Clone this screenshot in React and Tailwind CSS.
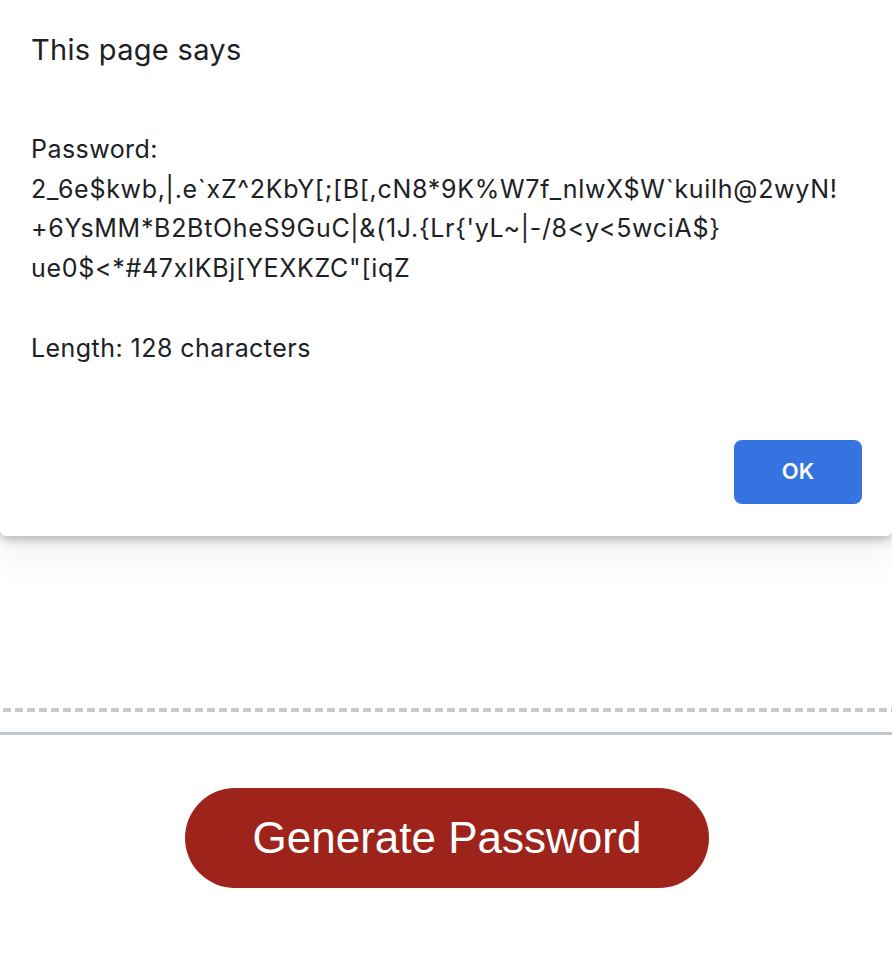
import React from 'react';

const password = [
    "2_6e$kwb,|.e`xZ^2KbY[;[B[,cN8*9K%W7f_nlwX$W`kuilh@2wyN!",
    "+6YsMM*B2BtOheS9GuC|&(1J.{Lr{'yL~|-/8<y<5wciA$}",
    "ue0$<*#47xlKBj[YEXKZC\"[iqZ",
];

const AlertDialog = () => {
    return (
        <div className="absolute top-0 left-0 right-0 bg-white rounded-b-[6px] shadow-[0_4px_10px_rgba(0,0,0,0.25),0_20px_40px_rgba(0,0,0,0.06)] font-['Inter',sans-serif] text-[#202124]">
            <div className="pl-[31px] pr-[30px] pt-[32px] pb-[32px]">
                <h1 className="text-[29px] leading-[36px] tracking-[0.3px]">This page says</h1>
                <div className="mt-[62px] text-[25px] leading-[39.5px] tracking-[0.45px]">
                    <div>Password:</div>
                    {password.map((line, i) => (
                        <div key={i} className="tracking-[0.7px]">{line}</div>
                    ))}
                    <div className="mt-[41px]">Length: 128 characters</div>
                </div>
                <div className="flex justify-end mt-[71px]">
                    <button className="w-[128px] h-[64px] rounded-[8px] bg-[#3574e0] text-white text-[22px] font-semibold">
                        OK
                    </button>
                </div>
            </div>
        </div>
    );
};

const App = () => {
    return (
        <div className="relative min-h-[980px] bg-white">
            <div className="pt-[708px]">
                <div className="h-[4px] ml-[3px] bg-[repeating-linear-gradient(90deg,#c4cad0_0_8px,transparent_8px_12px)]"></div>
                <div className="mt-[20px] h-[3px] bg-[#c0c7ce]"></div>
                <div className="flex justify-center mt-[53px] pl-[2px]">
                    <button className="w-[524px] h-[100px] rounded-full bg-[#9e231b] text-white text-[44px] font-['Liberation_Sans',Arial,sans-serif]">
                        Generate Password
                    </button>
                </div>
            </div>
            <AlertDialog />
        </div>
    );
};

export default App;
